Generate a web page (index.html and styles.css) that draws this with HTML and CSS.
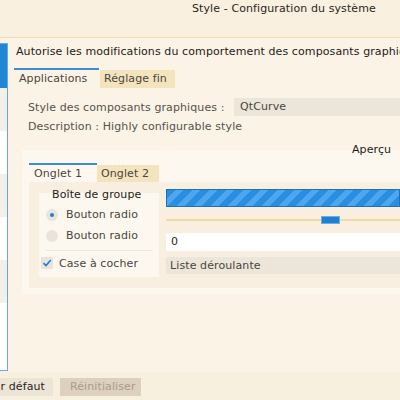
FILE: index.html
```html
<!DOCTYPE html>
<html lang="fr">
<head>
<meta charset="utf-8">
<link rel="stylesheet" href="styles.css">
</head>
<body>
<div class="window">
  <div class="titlebar"><span class="title">Style - Configuration du système</span></div>
  <div class="body">
    <div class="sidebar">
      <div class="item selected"></div>
      <div class="item grey"></div>
      <div class="item"></div>
      <div class="item grey"></div>
      <div class="item"></div>
      <div class="item grey"></div>
      <div class="item"></div>
    </div>
    <div class="main">
      <div class="heading">Autorise les modifications du comportement des composants graphiques</div>
      <div class="tabs">
        <div class="tab active">Applications</div>
        <div class="tab inactive">Réglage fin</div>
      </div>
      <div class="panel">
        <div class="row">
          <span class="label">Style des composants graphiques :</span>
          <span class="combo">QtCurve</span>
        </div>
        <div class="desc">Description : Highly configurable style</div>
        <div class="preview">
          <div class="preview-title">Aperçu</div>
          <div class="tabs small">
            <div class="tab active">Onglet 1</div>
            <div class="tab inactive">Onglet 2</div>
          </div>
          <div class="tabpanel">
            <div class="group">
              <div class="group-title">Boîte de groupe</div>
              <div class="opt first"><span class="radio on"></span>Bouton radio</div>
              <div class="opt"><span class="radio"></span>Bouton radio</div>
              <div class="sep"></div>
              <div class="opt check-opt"><span class="check"><svg width="12" height="12" viewBox="0 0 12 12"><path d="M2.5 6.2 L5 8.6 L9.8 3" fill="none" stroke="#1f80d0" stroke-width="1.6"/></svg></span>Case à cocher</div>
            </div>
            <div class="widgets">
              <div class="progress"></div>
              <div class="slider"><span class="handle"></span></div>
              <div class="spin">0</div>
              <div class="dropdown">Liste déroulante</div>
            </div>
          </div>
        </div>
      </div>
    </div>
  </div>
  <div class="footer">
    <span class="btn default">Valeurs par défaut</span>
    <span class="btn disabled">Réinitialiser</span>
  </div>
</div>
</body>
</html>
```
FILE: styles.css
```css
html, body {
  margin: 0;
  padding: 0;
  width: 400px;
  height: 400px;
  overflow: hidden;
  background: #fbf3e6;
}
.window {
  width: 400px;
  height: 400px;
  font-family: "DejaVu Sans", sans-serif;
  font-size: 11px;
  letter-spacing: 0.1px;
  color: #2a2622;
  display: flex;
  flex-direction: column;
}
.titlebar {
  height: 38px;
  flex: none;
  box-sizing: border-box;
  background: #f9f0df;
  border-bottom: 1px solid #f3dcae;
  padding: 2px 0 0 192px;
  display: flex;
}
.title {
  white-space: nowrap;
  line-height: 14px;
}
.body {
  display: flex;
  flex: none;
  height: 334px;
  padding-top: 5px;
  box-sizing: border-box;
}
.sidebar {
  width: 8px;
  height: 328px;
  border: 1px solid #6aa6e2;
  border-left: none;
  box-sizing: border-box;
  background: #fff;
  display: flex;
  flex-direction: column;
  flex: none;
}
.item { height: 43px; background: #fff; flex: none; }
.item.grey { background: #f3efe9; }
.item.selected { background: #1f87d6; height: 44px; }
.main {
  margin-left: 6px;
  flex: 1;
  min-width: 0;
  display: flex;
  flex-direction: column;
}
.heading {
  white-space: nowrap;
  height: 14px;
  line-height: 14px;
  margin-top: 2px;
  color: #1e1b18;
  padding-left: 2px;
}
.tabs {
  display: flex;
  margin-top: 9px;
  height: 20px;
  flex: none;
}
.tab {
  white-space: nowrap;
  line-height: 18px;
  box-sizing: border-box;
  color: #4a4540;
}
.tab.active {
  border-top: 2px solid #3b8ed6;
  padding: 0 0 0 5px;
  width: 85px;
}
.tab.inactive {
  background: #f4e4bd;
  margin-top: 2px;
  padding: 0 4px;
  width: 75px;
  margin-left: 1px;
}
.panel {
  flex: 1;
  background: #fbf3e6;
  padding: 10px 0 0 14px;
  white-space: nowrap;
}
.row {
  display: flex;
  align-items: center;
  height: 18px;
}
.label {
  color: #58524c;
  width: 206px;
  flex: none;
}
.combo {
  background: #ece6da;
  flex: 1;
  height: 18px;
  line-height: 18px;
  padding-left: 6px;
  color: #4a4540;
}
.desc {
  color: #58524c;
  margin-top: 4px;
  height: 14px;
  line-height: 14px;
}
.preview {
  margin: 16px 0 0 -6px;
  background: #fdf8ef;
  height: 144px;
  padding: 0 0 6px 7px;
  box-sizing: border-box;
  display: flex;
  flex-direction: column;
}
.preview-title {
  padding-left: 323px;
  height: 14px;
  line-height: 14px;
  margin-top: -7px;
  color: #1e1b18;
}
.tabs.small {
  margin-top: 6px;
  height: 19px;
}
.tabs.small .tab.active { width: 68px; }
.tabs.small .tab.inactive { width: 62px; margin-left: 0; line-height: 17px; }
.tabpanel {
  flex: 1;
  background: #f8efe0;
  display: flex;
  padding: 7px 0 0 10px;
  gap: 7px;
}
.group {
  width: 120px;
  height: 84px;
  margin-top: 4px;
  flex: none;
  background: #fdf8ef;
  padding: 0 0 0 7px;
  box-sizing: border-box;
}
.group-title {
  color: #1e1b18;
  padding-left: 6px;
  height: 14px;
  line-height: 14px;
  margin-top: -5px;
}
.opt {
  display: flex;
  align-items: center;
  height: 21px;
  color: #4a4540;
  gap: 8px;
}
.opt.first { margin-top: 2px; }
.radio {
  width: 12px;
  height: 12px;
  border-radius: 50%;
  background: #e9e4da;
  position: relative;
  flex: none;
}
.radio.on::after {
  content: "";
  position: absolute;
  left: 4px;
  top: 4px;
  width: 4px;
  height: 4px;
  border-radius: 50%;
  background: #1f80d0;
}
.sep {
  height: 1px;
  background: #efe7d9;
  margin: 4px 6px 0 0;
}
.check-opt { gap: 6px; margin-left: -5px; height: 24px; }
.check {
  width: 12px;
  height: 12px;
  background: #e9e4da;
  display: block;
  flex: none;
}
.check svg { display: block; }
.widgets {
  flex: 1;
  display: flex;
  flex-direction: column;
}
.progress {
  height: 18px;
  flex: none;
  border: 1px solid #1f70bb;
  box-sizing: border-box;
  background: repeating-linear-gradient(135deg, #2a8ee0 0 6px, #4ea6ee 6px 12px);
}
.slider {
  height: 26px;
  flex: none;
  position: relative;
}
.slider::before {
  content: "";
  position: absolute;
  left: 0;
  right: 0;
  top: 12px;
  height: 2px;
  background: #f1dca6;
}
.handle {
  position: absolute;
  left: 155px;
  top: 9px;
  width: 19px;
  height: 8px;
  background: #1f80d0;
  border: 1px solid #6aaee8;
  box-sizing: border-box;
}
.spin {
  background: #fff;
  height: 18px;
  flex: none;
  line-height: 18px;
  padding-left: 5px;
  color: #2a2622;
}
.dropdown {
  margin-top: 6px;
  background: #ebe6d9;
  height: 17px;
  flex: none;
  line-height: 17px;
  padding-left: 4px;
  color: #4a4540;
}
.footer {
  flex: 1;
  background: #f8f0de;
  display: flex;
  gap: 7px;
  padding-top: 6px;
  white-space: nowrap;
}
.btn {
  background: #ece5d6;
  height: 18px;
  line-height: 18px;
  color: #2a2622;
  box-sizing: border-box;
}
.btn.default {
  width: 123px;
  margin-left: -70px;
  text-align: right;
  padding-right: 8px;
}
.btn.disabled {
  background: #ddd0bf;
  color: #a99c8a;
  width: 81px;
  padding: 0 10px;
}
```
